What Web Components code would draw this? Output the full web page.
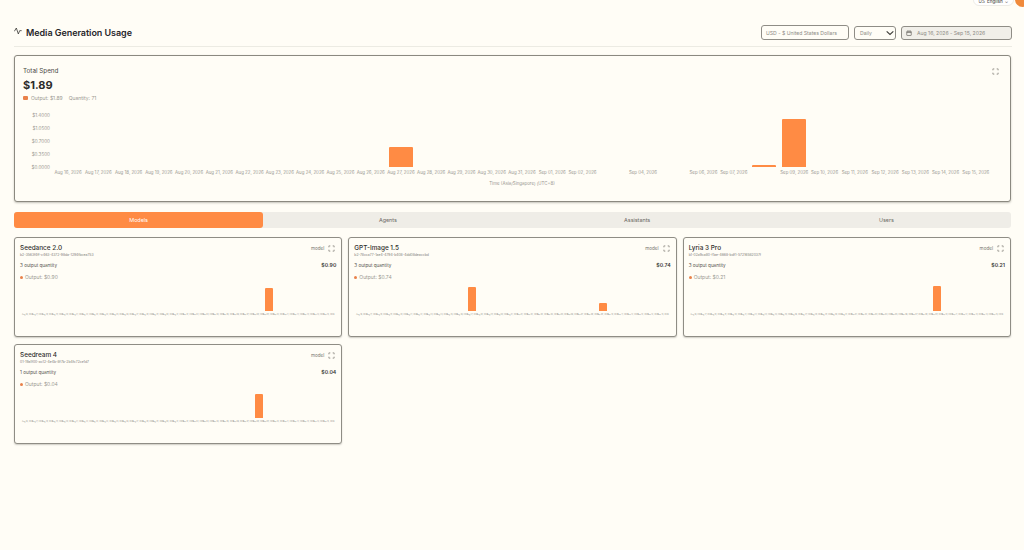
<!DOCTYPE html>
<html lang="en">
<head>
<meta charset="utf-8">
<title>Media Generation Usage</title>
<style>
html,body{margin:0;padding:0;height:100%;background:#fffdf6;overflow:hidden}
body{font-family:Inter,"Liberation Sans",sans-serif;color:#2b2a28}
</style>
</head>
<body>
<usage-page>
  <lang-pill slot="top"></lang-pill>
  <page-header title-text="Media Generation Usage" slot="header"></page-header>
  <spend-card slot="spend"></spend-card>
  <tab-bar slot="tabs" items="Models,Agents,Assistants,Users"></tab-bar>
  <model-card name="Seedance 2.0" uid="b2-3563f4ff-c463-4372-98da-1294fbcea753" qty="3 output quantity" cost="$0.90" bars="24:23"></model-card>
  <model-card name="GPT-Image 1.5" uid="b2-78cca77-1ae4-4794-b408-4dd08deaccbd" qty="3 output quantity" cost="$0.74" bars="11:24,24:8"></model-card>
  <model-card name="Lyria 3 Pro" uid="b1-02a9ca80-f1ae-4668-bdf1-57216582037f" qty="3 output quantity" cost="$0.21" bars="24:25"></model-card>
  <model-card name="Seedream 4" uid="01-19a1f00-ac12-4e4b-8f7b-2b4fc72ce1d7" qty="1 output quantity" cost="$0.04" bars="23:24"></model-card>
</usage-page>
<script>
const ORANGE = '#ff8b44';
const DATES = [];
for (let d = 16; d <= 31; d++) DATES.push(`Aug ${d}, 2026`);
for (let d = 1; d <= 15; d++) DATES.push(`Sep ${String(d).padStart(2,'0')}, 2026`);

function define(name, css, html, init) {
  customElements.define(name, class extends HTMLElement {
    connectedCallback() {
      if (this.shadowRoot) return;
      const root = this.attachShadow({mode: 'open'});
      root.innerHTML = `<style>${css}</style>` + (typeof html === 'function' ? html(this) : html);
      if (init) init(this, root);
    }
  });
}

const EXPAND = `<svg viewBox="0 0 24 24" width="100%" height="100%" fill="none" stroke="#85837c" stroke-width="2.6" stroke-linecap="butt"><path d="M3 8V3h5M16 3h5v5M21 16v5h-5M8 21H3v-5"/></svg>`;

define('expand-icon', `:host{display:inline-block;width:7px;height:7px;line-height:0}`, EXPAND);

define('usage-page', `
  :host{display:block;height:550px;box-sizing:border-box;padding:0 13px 0 14px;position:relative}
  .cards{display:grid;grid-template-columns:repeat(3,1fr);gap:7px 6px;margin-top:9px}
  .tabs{display:block;margin-top:10px}
  ::slotted(spend-card){margin-top:8px}
  ::slotted(page-header){margin-right:-1px}
`, `<slot name="top"></slot><slot name="header"></slot><slot name="spend"></slot>
    <div class="tabs"><slot name="tabs"></slot></div><div class="cards"><slot></slot></div>`);

define('lang-pill', `
  :host{position:absolute;top:-6px;right:0;width:51px;height:12px;display:block}
  .pill{position:absolute;left:0;top:0;width:41px;height:12px;box-sizing:border-box;background:#fff;border:1px solid #eeece6;border-radius:6px;
    font-size:4.6px;color:#55534e;display:flex;align-items:center;justify-content:center;gap:2px;padding-top:3px}
  .dot{position:absolute;right:-6px;top:-2px;width:15px;height:15px;border-radius:50%;background:#f08a3c}
`, `<div class="pill"><span>US</span><b style="font-weight:500">English</b><span>⌄</span></div><div class="dot"></div>`);

define('page-header', `
  :host{display:flex;align-items:center;justify-content:space-between;padding:25px 0 6px;border-bottom:1px solid #ecebe3}
  .t{display:flex;align-items:center;gap:4px;font-size:9px;font-weight:600;color:#27262a;letter-spacing:-.05px}
  svg{display:block}
  .t svg{margin-top:-3px}
  .c{display:flex;align-items:center;gap:5px;font-size:5.1px;color:#8d8b85}
  .f{height:15px;box-sizing:border-box;border:1px solid #8f8d86;border-radius:3px;display:flex;align-items:center;background:#fffdf6}
  .usd{width:88px;padding-left:4px}
  .sel{width:42px;padding:0 1px 0 5px;justify-content:space-between;height:14px;margin-top:1px}
  .date{width:111px;padding-left:4px;gap:5px;background:#f1efe9;height:14px;margin-top:1px}
`, h => `<div class="t"><svg width="8" height="8" viewBox="0 0 24 24" fill="none" stroke="#3a3936" stroke-width="2.4"><path d="M1 13 7 3l6 18 4-10h6"/></svg><span>${h.getAttribute('title-text')}</span></div>
  <div class="c"><div class="f usd">USD - $ United States Dollars</div>
  <div class="f sel"><span>Daily</span><svg width="8" height="6" viewBox="0 0 12 8" fill="none" stroke="#3f3e3a" stroke-width="1.8"><path d="M1 1.5 6 6l5-4.5"/></svg></div>
  <div class="f date"><svg width="6" height="6" viewBox="0 0 24 24" fill="none" stroke="#55534e" stroke-width="2.4"><rect x="3" y="5" width="18" height="17" rx="2"/><path d="M3 10h18M8 2v5M16 2v5"/></svg><span>Aug 16, 2026 - Sep 15, 2026</span></div></div>`);

define('bar-chart', `
  :host{display:block;--bar:24px;--h:48px;--font:4.4px;--label-h:8px}
  .plot{display:grid;grid-template-columns:repeat(31,1fr);align-items:end}
  .col{display:flex;flex-direction:column;align-items:center;min-width:0}
  .slot{height:var(--h);width:100%;display:flex;align-items:flex-end;justify-content:center}
  .bar{width:var(--bar);flex:none;background:${ORANGE};border-radius:1px 1px 0 0}
  .lab{height:var(--label-h);display:flex;align-items:center;white-space:nowrap;font-size:var(--font);color:#9a9892;justify-content:center;width:100%;overflow:visible}
`, h => {
  const bars = Object.fromEntries((h.getAttribute('bars')||'').split(',').filter(Boolean).map(s=>s.split(':').map(Number)));
  const skip = (h.getAttribute('skip')||'').split(',').filter(Boolean).map(Number);
  return `<div class="plot">` + DATES.map((d,i)=>`<div class="col"><div class="slot">${bars[i]?`<div class="bar" style="height:${bars[i]}px"></div>`:''}</div><div class="lab">${skip.includes(i)?'':d}</div></div>`).join('') + `</div>`;
});

define('spend-card', `
  :host{display:block;height:147px;box-sizing:border-box;border:1px solid #8b8980;border-radius:3px;background:#fffdf6;box-shadow:0 1px 2px rgba(60,58,50,.3);padding:11px 9px 0 8px;position:relative}
  .top{display:flex;justify-content:space-between}
  .lbl{font-size:6.3px;color:#4b4a46;line-height:8px}
  .amt{font-size:11px;font-weight:700;color:#2c2b2a;line-height:15px;margin-top:3px}
  .leg{display:flex;align-items:center;font-size:5px;color:#9b9992;margin-top:2px;line-height:6px}
  .sw{width:5px;height:3.5px;border-radius:1px;background:#e9814a;margin-right:3px}
  .q{margin-left:6px}
  expand-icon{margin:1px 2px 0 0}
  .chart{display:flex;margin-top:11px;align-items:flex-start}
  .y{width:27px;height:57px;box-sizing:border-box;display:flex;flex-direction:column;justify-content:space-between;align-items:flex-end;font-size:4.6px;color:#9a9892;line-height:5px;flex:none;margin-top:1px}
  .p{flex:1;margin:0 10px 0 3px}
  bar-chart{--h:53px;--label-h:10px;margin-top:2px}
  .xt{text-align:center;font-size:4.4px;color:#9a9892;margin-top:4px;line-height:6px}
`, `<div class="top"><div><div class="lbl">Total Spend</div><div class="amt">$1.89</div>
   <div class="leg"><span class="sw"></span>Output: $1.89<span class="q">Quantity: 71</span></div></div><expand-icon></expand-icon></div>
   <div class="chart"><div class="y"><span>$1.4000</span><span>$1.0500</span><span>$0.7000</span><span>$0.3500</span><span>$0.0000</span></div>
   <div class="p"><bar-chart bars="11:20,23:2,24:48" skip="18,20,23"></bar-chart><div class="xt">Time (Asia/Singapore) (UTC+8)</div></div></div>`);

define('tab-bar', `
  :host{display:grid;grid-auto-flow:column;grid-auto-columns:1fr;height:16px;background:#efede7;border-radius:3px;font-size:5.4px;color:#6d6b65}
  div{display:flex;align-items:center;justify-content:center;border-radius:3px}
  .on{background:${ORANGE};color:#fff}
`, h => h.getAttribute('items').split(',').map((t,i)=>`<div class="${i?'':'on'}">${t}</div>`).join(''));

define('model-card', `
  :host{display:block;height:100px;box-sizing:border-box;border:1px solid #8f8d85;border-radius:3px;background:#fffdf6;box-shadow:0 1px 1.5px rgba(60,58,50,.25);padding:6px 5px 0 5px}
  .r{display:flex;justify-content:space-between;align-items:flex-start}
  .n{font-size:6.4px;font-weight:500;color:#2f2e2c;line-height:9px}
  .id{font-size:3.4px;color:#7e7c76;line-height:5px;white-space:nowrap}
  .m{display:flex;align-items:center;gap:4px;font-size:4.6px;color:#77756f;margin-top:1px;margin-right:1px}
  .q{font-size:4.6px;color:#55534e;line-height:6px}
  .c{font-size:5.2px;font-weight:600;color:#3a3936;line-height:6px;margin-top:-1px}
  .mid{margin-top:5px}
  .leg{display:flex;align-items:center;font-size:5px;color:#9b9992;margin-top:5px;line-height:6px}
  .d{width:3px;height:3px;border-radius:50%;background:#e9814a;margin-right:2px}
  bar-chart{--bar:8px;--h:31px;--font:1.8px;--label-h:5px;margin:0 2.5px}
`, h => {
  const a = n => h.getAttribute(n);
  return `<div class="r"><div><div class="n">${a('name')}</div><div class="id">${a('uid')}</div></div><div class="m"><span>model</span><expand-icon></expand-icon></div></div>
  <div class="r mid"><div class="q">${a('qty')}</div><div class="c">${a('cost')}</div></div>
  <div class="leg"><span class="d"></span>Output: ${a('cost')}</div>
  <bar-chart bars="${a('bars')}"></bar-chart>`;
});
</script>
</body>
</html>
